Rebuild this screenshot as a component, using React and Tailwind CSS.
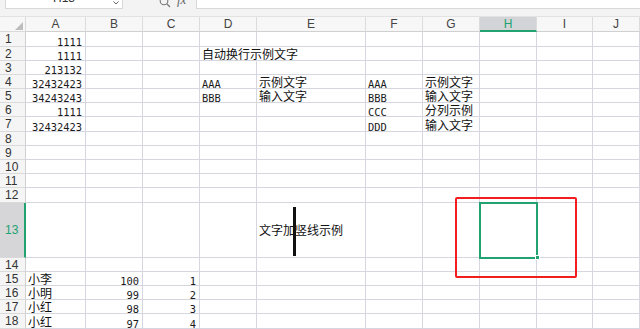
import React from 'react';

const COLS = ['w-[26px]', 'w-[60px]', 'w-[57px]', 'w-[57px]', 'w-[57px]', 'w-[109px]', 'w-[57px]', 'w-[57px]', 'w-[57px]', 'w-[56px]', 'w-[47px]'];
const LETTERS = ['A', 'B', 'C', 'D', 'E', 'F', 'G', 'H', 'I', 'J'];

const M = (t) => ({ t, m: true });
const MR = (t) => ({ t, m: true, r: true });
const C = (t) => ({ t });

const ROWS = [
  { n: 1, h: 'h-[15px]', c: { 1: MR('1111') } },
  { n: 2, h: 'h-[14px]', c: { 1: MR('1111'), 4: { t: '自动换行示例文字', over: true } } },
  { n: 3, h: 'h-[14px]', c: { 1: MR('213132') } },
  { n: 4, h: 'h-[14px]', c: { 1: MR('32432423'), 4: M('AAA'), 5: C('示例文字'), 6: M('AAA'), 7: C('示例文字') } },
  { n: 5, h: 'h-[14px]', c: { 1: MR('34243243'), 4: M('BBB'), 5: C('输入文字'), 6: M('BBB'), 7: C('输入文字') } },
  { n: 6, h: 'h-[14px]', c: { 1: MR('1111'), 6: M('CCC'), 7: C('分列示例') } },
  { n: 7, h: 'h-[15px]', c: { 1: MR('32432423'), 6: M('DDD'), 7: C('输入文字') } },
  { n: 8, h: 'h-[14px]', c: {} },
  { n: 9, h: 'h-[14px]', c: {} },
  { n: 10, h: 'h-[14px]', c: {} },
  { n: 11, h: 'h-[14px]', c: {} },
  { n: 12, h: 'h-[15px]', c: {} },
  { n: 13, h: 'h-[55px]', sel: true, c: { 5: C('文字加竖线示例') } },
  { n: 14, h: 'h-[14px]', c: {} },
  { n: 15, h: 'h-[14px]', c: { 1: C('小李'), 2: MR('100'), 3: MR('1') } },
  { n: 16, h: 'h-[14px]', c: { 1: C('小明'), 2: MR('99'), 3: MR('2') } },
  { n: 17, h: 'h-[14px]', c: { 1: C('小红'), 2: MR('98'), 3: MR('3') } },
  { n: 18, h: 'h-[15px]', c: { 1: C('小红'), 2: MR('97'), 3: MR('4') } },
];

function Cell({ w, cell, sel }) {
  const align = cell && cell.r ? 'justify-end pr-[3px]' : 'justify-start pl-[2px]';
  const valign = sel ? 'items-center' : 'items-end';
  const border = cell && cell.over ? 'border-r-transparent' : '';
  return (
    <div className={`${w} shrink-0 h-full border-r border-b border-[#d6d6e0] flex ${valign} ${align} ${border}`}>
      {cell ? (
        cell.m ? (
          <span className="text-[10.4px] leading-[8px] text-[#1a1a1a] whitespace-nowrap font-['DejaVu_Sans_Mono',monospace]">{cell.t}</span>
        ) : (
          <span className="text-[12px] leading-[12px] text-[#111] whitespace-nowrap relative z-10 font-['Noto_Sans_CJK_SC',sans-serif]">{cell.t}</span>
        )
      ) : null}
    </div>
  );
}

export default function App() {
  return (
    <div className="relative w-[640px] h-[329px] overflow-hidden bg-white font-['Noto_Sans',sans-serif]">
      {/* toolbar */}
      <div className="h-[16px] bg-[#f3f3f3] flex items-start">
        <div className="ml-[5px] w-[118px] h-[9px] bg-white border border-t-0 border-[#d8d8d8] overflow-hidden relative flex justify-center">
          <span className="-mt-[8px] text-[12px] leading-[12px] text-[#333] font-['Liberation_Sans',sans-serif]">H13</span>
          <svg className="absolute right-[3px] top-[1px]" width="6" height="4" viewBox="0 0 6 4">
            <path d="M0.5 0.5 L3 3 L5.5 0.5" fill="none" stroke="#666" strokeWidth="1" />
          </svg>
        </div>
        <div className="ml-[36px] h-[9px] overflow-hidden flex items-start gap-[6px]">
          <svg className="-mt-[4px]" width="12" height="12" viewBox="0 0 12 12">
            <circle cx="5" cy="5" r="3.8" fill="none" stroke="#777" strokeWidth="1.1" />
            <path d="M8 8 L11 11" stroke="#777" strokeWidth="1.2" />
          </svg>
          <span className="-mt-[7px] text-[13px] leading-[13px] italic text-[#666] font-['Liberation_Serif',serif]">fx</span>
        </div>
        <div className="ml-[10px] flex-1 h-[9px] bg-white border-b border-l border-[#d8d8d8]" />
      </div>
      {/* column header */}
      <div className="flex h-[16px] bg-[#f7f7f7] border-t border-[#e2e2e2]">
        <div className="w-[26px] shrink-0 h-full border-r border-b border-[#d9d9d9] relative">
          <svg className="absolute left-[15px] top-[5px]" width="8" height="8" viewBox="0 0 8 8">
            <polygon points="8,0 8,8 0,8" fill="#bdbdbd" />
          </svg>
        </div>
        {LETTERS.map((l, i) => {
          const isSel = l === 'H';
          return (
            <div
              key={l}
              className={`${COLS[i + 1]} shrink-0 h-full border-r border-[#dcdcdc] flex items-center justify-center text-[12px] leading-none font-['Liberation_Sans',sans-serif] ${isSel ? 'bg-[#d3d4d7] border-b-2 border-b-[#21a270] text-[#21a270]' : 'border-b border-b-[#d0d0d0] text-[#444]'}`}
            >
              {l}
            </div>
          );
        })}
      </div>
      {/* rows */}
      {ROWS.map((row) => (
        <div key={row.n} className={`flex ${row.h}`}>
          <div
            className={`w-[26px] shrink-0 h-full border-b border-[#dadada] flex items-center pl-[5px] text-[12px] leading-none font-['Liberation_Sans',sans-serif] ${row.sel ? 'bg-[#d6d6d9] border-r-2 border-r-[#21a270] text-[#21a270]' : 'bg-[#f5f5f5] border-r border-r-[#d0d0d0] text-[#333]'}`}
          >
            {row.n}
          </div>
          {LETTERS.map((l, i) => (
            <Cell key={l} w={COLS[i + 1]} cell={row.c[i + 1]} sel={row.sel} />
          ))}
        </div>
      ))}
      {/* vertical black line over text in E13 */}
      <div className="absolute left-[293px] top-[207px] w-[2.5px] h-[49px] bg-[#111] z-20" />
      {/* selected cell H13 */}
      <div className="absolute left-[479px] top-[202px] w-[59px] h-[57px] border-2 border-[#21a270]" />
      <div className="absolute left-[535px] top-[255px] w-[5px] h-[5px] bg-[#21a270] border border-white" />
      {/* red annotation rectangle */}
      <div className="absolute left-[455px] top-[197px] w-[122px] h-[81px] border-2 border-[#f21d1d] rounded-[2px]" />
    </div>
  );
}
